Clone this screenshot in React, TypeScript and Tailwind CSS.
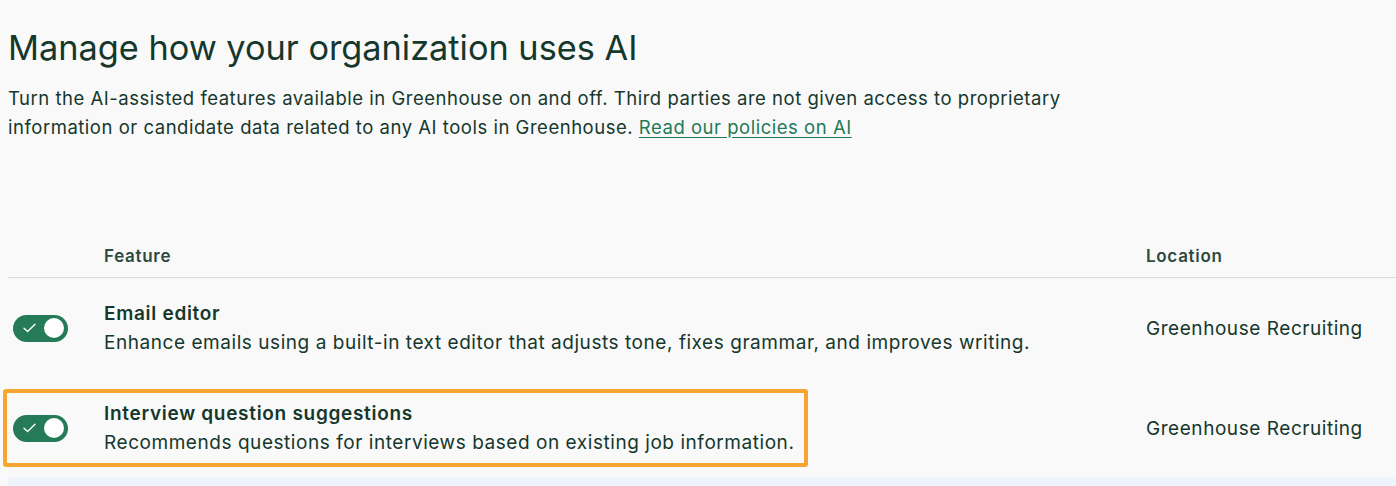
import React from "react";

function Toggle() {
  return (
    <div className="flex h-[27px] w-[55px] shrink-0 items-center justify-between rounded-full bg-[#257a58] pl-[10px] pr-[4px]">
      <svg width="13" height="10" viewBox="0 0 13 10" fill="none">
        <path d="M1 5.2 L4.6 8.6 L12 1.2" stroke="#ffffff" strokeWidth="1.4" strokeLinecap="round" strokeLinejoin="round" />
      </svg>
      <div className="h-[20px] w-[20px] rounded-full bg-white" />
    </div>
  );
}

function Row({ title, desc, highlight }: { title: string; desc: string; highlight?: boolean }) {
  return (
    <div className="flex items-center">
      <div className="flex w-[1138px] items-center">
        <div
          className={
            highlight
              ? "-ml-[5px] flex items-center rounded-[3px] border-4 border-[#f6a531] pb-[6px] pl-[6px] pr-[10px] pt-[6px]"
              : "flex items-center"
          }
        >
          <div className={highlight ? "w-[91px]" : "w-[96px] pl-[5px]"}>
            <Toggle />
          </div>
          <div className="flex flex-col">
            <div className="text-[19px] font-semibold leading-[29px] tracking-[0.7px] text-[#15372c]">{title}</div>
            <div className="whitespace-nowrap text-[19px] leading-[29px] tracking-[0.55px] text-[#15372c]">{desc}</div>
          </div>
        </div>
      </div>
      <div className="whitespace-nowrap text-[19px] leading-[29px] tracking-[0.55px] text-[#15372c]">
        Greenhouse Recruiting
      </div>
    </div>
  );
}

export default function App() {
  return (
    <div
      className="h-[486px] w-[1396px] overflow-hidden bg-[#f9f9f9] pl-[8px]"
      style={{ fontFamily: "Inter, 'Noto Sans', sans-serif" }}
    >
      <h1 className="pt-[26px] text-[34.3px] font-normal leading-[44px] text-[#15372c]">
        Manage how your organization uses AI
      </h1>
      <p className="mt-[14px] w-[1100px] text-[18.5px] leading-[29px] tracking-[0.52px] text-[#15372c]">
        <span className="whitespace-nowrap">
          Turn the AI-assisted features available in Greenhouse on and off. Third parties are not given access to proprietary
        </span>
        <br />
        information or candidate data related to any AI tools in Greenhouse.{" "}
        <a href="#" className="text-[#1f7a57] underline underline-offset-[3px]">
          Read our policies on AI
        </a>
      </p>
      <div className="mt-[94px]">
        <div className="flex h-[42px] items-center border-b border-[#dcdcdc] text-[17px] font-semibold tracking-[0.7px] text-[#2e4a40]">
          <div className="w-[1138px] pl-[96px]">Feature</div>
          <div>Location</div>
        </div>
        <div className="pt-[21px]">
          <Row
            title="Email editor"
            desc="Enhance emails using a built-in text editor that adjusts tone, fixes grammar, and improves writing."
          />
        </div>
        <div className="mt-[32px]">
          <Row
            title="Interview question suggestions"
            desc="Recommends questions for interviews based on existing job information."
            highlight
          />
        </div>
        <div className="mt-[10px] h-[20px] bg-[#eef4fc]" />
      </div>
    </div>
  );
}
